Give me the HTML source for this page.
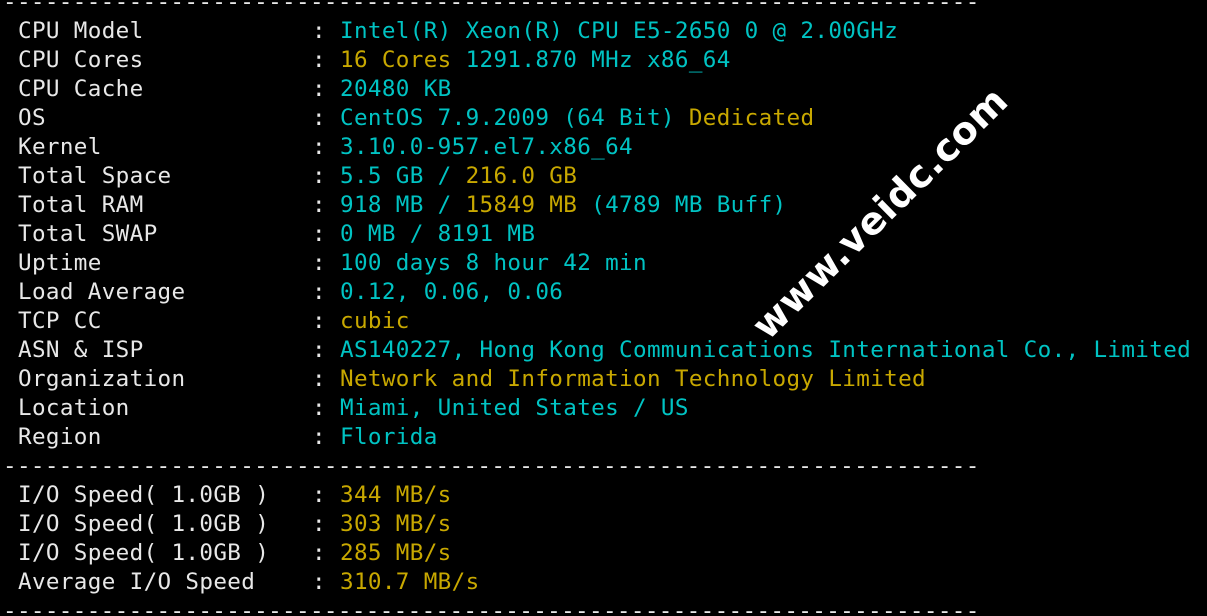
<!DOCTYPE html>
<html><head><meta charset="utf-8"><style>
html,body{margin:0;padding:0;background:#000;width:1207px;height:616px;overflow:hidden;position:relative}
.r{position:absolute;left:0;height:29px;line-height:29px;font-family:"DejaVu Sans Mono","Liberation Mono",monospace;font-size:22.6px;color:#e8e8e8;white-space:pre;letter-spacing:0.35px}
.r span{position:absolute;top:0}
.l{left:18px}.k{left:312px}.v{left:340px}
.d{left:3px;width:980px;overflow:hidden;display:block}
.c{color:#00c3c3}.y{color:#c8a800}
.wm{position:absolute;left:880px;top:213px;transform:translate(-50%,-50%) rotate(-44.5deg);font-family:"DejaVu Sans",sans-serif;font-weight:bold;font-size:38px;color:#fff;white-space:nowrap;letter-spacing:0.5px}
</style></head><body>
<div class="r" style="top:-12.5px"><span class="d">----------------------------------------------------------------------------</span></div>
<div class="r" style="top:16.5px"><span class="l">CPU Model</span><span class="k">:</span><span class="v c">Intel(R) Xeon(R) CPU E5-2650 0 @ 2.00GHz</span></div>
<div class="r" style="top:45.5px"><span class="l">CPU Cores</span><span class="k">:</span><span class="v"><b style="font-weight:normal" class="y">16 Cores</b> <b style="font-weight:normal" class="c">1291.870 MHz x86_64</b></span></div>
<div class="r" style="top:74.5px"><span class="l">CPU Cache</span><span class="k">:</span><span class="v c">20480 KB</span></div>
<div class="r" style="top:103.5px"><span class="l">OS</span><span class="k">:</span><span class="v"><b style="font-weight:normal" class="c">CentOS 7.9.2009 (64 Bit)</b> <b style="font-weight:normal" class="y">Dedicated</b></span></div>
<div class="r" style="top:132.5px"><span class="l">Kernel</span><span class="k">:</span><span class="v c">3.10.0-957.el7.x86_64</span></div>
<div class="r" style="top:161.5px"><span class="l">Total Space</span><span class="k">:</span><span class="v"><b style="font-weight:normal" class="c">5.5 GB /</b> <b style="font-weight:normal" class="y">216.0 GB</b></span></div>
<div class="r" style="top:190.5px"><span class="l">Total RAM</span><span class="k">:</span><span class="v"><b style="font-weight:normal" class="c">918 MB /</b> <b style="font-weight:normal" class="y">15849 MB</b> <b style="font-weight:normal" class="c">(4789 MB Buff)</b></span></div>
<div class="r" style="top:219.5px"><span class="l">Total SWAP</span><span class="k">:</span><span class="v c">0 MB / 8191 MB</span></div>
<div class="r" style="top:248.5px"><span class="l">Uptime</span><span class="k">:</span><span class="v c">100 days 8 hour 42 min</span></div>
<div class="r" style="top:277.5px"><span class="l">Load Average</span><span class="k">:</span><span class="v c">0.12, 0.06, 0.06</span></div>
<div class="r" style="top:306.5px"><span class="l">TCP CC</span><span class="k">:</span><span class="v y">cubic</span></div>
<div class="r" style="top:335.5px"><span class="l">ASN &amp; ISP</span><span class="k">:</span><span class="v c">AS140227, Hong Kong Communications International Co., Limited</span></div>
<div class="r" style="top:364.5px"><span class="l">Organization</span><span class="k">:</span><span class="v y">Network and Information Technology Limited</span></div>
<div class="r" style="top:393.5px"><span class="l">Location</span><span class="k">:</span><span class="v c">Miami, United States / US</span></div>
<div class="r" style="top:422.5px"><span class="l">Region</span><span class="k">:</span><span class="v c">Florida</span></div>
<div class="r" style="top:451.5px"><span class="d">----------------------------------------------------------------------------</span></div>
<div class="r" style="top:480.5px"><span class="l">I/O Speed( 1.0GB )</span><span class="k">:</span><span class="v y">344 MB/s</span></div>
<div class="r" style="top:509.5px"><span class="l">I/O Speed( 1.0GB )</span><span class="k">:</span><span class="v y">303 MB/s</span></div>
<div class="r" style="top:538.5px"><span class="l">I/O Speed( 1.0GB )</span><span class="k">:</span><span class="v y">285 MB/s</span></div>
<div class="r" style="top:567.5px"><span class="l">Average I/O Speed</span><span class="k">:</span><span class="v y">310.7 MB/s</span></div>
<div class="r" style="top:596.5px"><span class="d">----------------------------------------------------------------------------</span></div>
<div class="wm">www.veidc.com</div>
</body></html>
